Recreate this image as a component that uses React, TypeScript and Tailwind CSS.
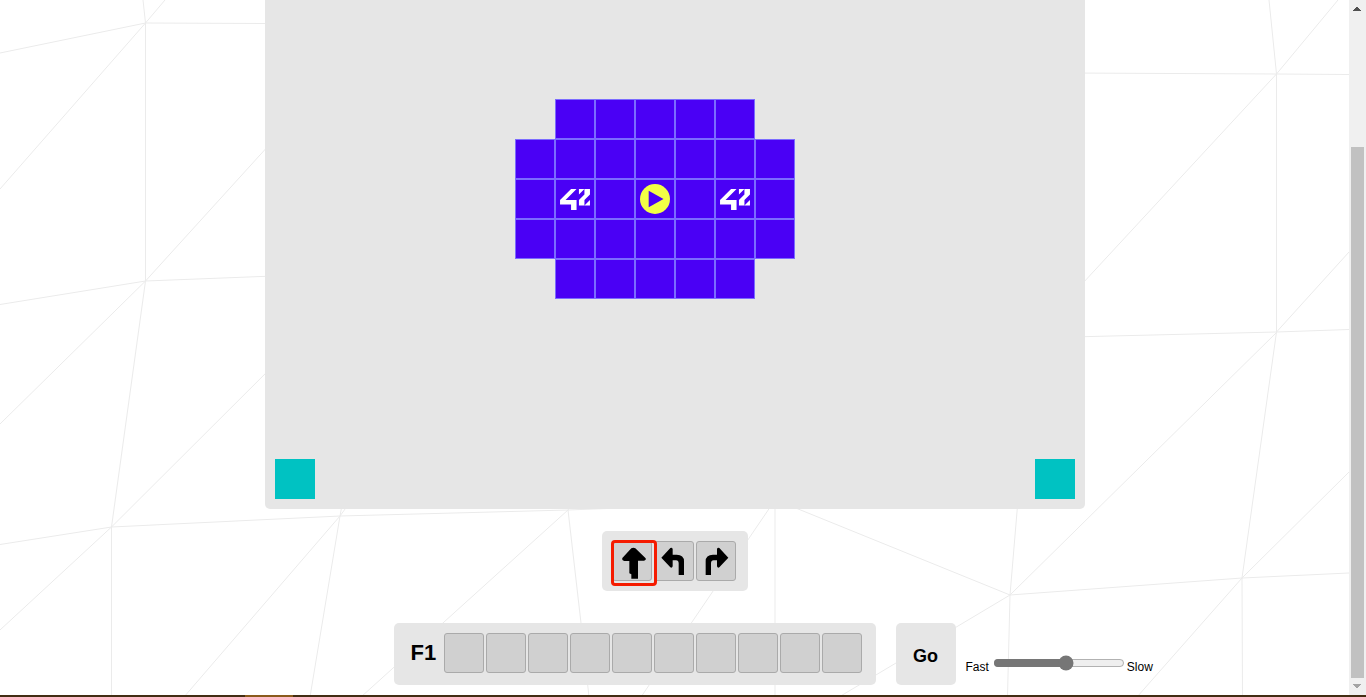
import { useState } from 'react';

const COLUMNS = 20;
const MAP = [
  '.......#####........',
  '......#######.......',
  '......#F#P#F#.......',
  '......#######.......',
  '.......#####........',
  '....................',
  '....................',
  '....................',
  '....................',
  'T..................T',
];

const TILES = MAP.map((row) => row.padEnd(COLUMNS, '.').split(''));

function Mesh() {
  return (
    <svg
      className="absolute inset-0 -z-10 h-full w-full"
      viewBox="0 0 1349 697"
      preserveAspectRatio="xMinYMin slice"
      fill="none"
      stroke="#ebebeb"
      aria-hidden="true"
    >
      <path d="M0 53 145.500 23 265 23.500M143 0 145.500 23V281L111.500 527V697M165 0 145.500 23 0 189M300 111 145.500 281 0 424M0 304.500 145.500 281 300 275M300 339 111.500 527 0 630M0 544.500 111.500 527 340 516 568 510 620 508" />
      <path d="M342 505 340 516 310 697M348 505 340 516 184 697M575 502 568 510 361 697M568 510 581 623 589 697M775 500 641 697M775 500V697M776 500 1010 595 1242 578 1349 573M1018 500 1010 595 1007.500 697M1277 332 1010 595 839 697" />
      <path d="M1269 0 1276.500 74V332L1242 578 1242.500 697M1338 0 1276.500 74 1070 297M1070 73 1276.500 74 1349 74.500M1349 252 1276.500 332M1070 337 1276.500 332 1349 329.500M1349 472 1242 578 1137 697" />
    </svg>
  );
}

function FortyTwo() {
  return (
    <svg className="h-[21px] w-[30px]" viewBox="32 -51 896 629" fill="#fff" aria-hidden="true">
      <path d="M32 412.600H362.100V578H526.800V279.100H197.300L526.800-51.100H362.100L32 279.100ZM597.900 114.200 762.700-51.100H597.900ZM762.700 114.200 597.900 279.100V443.900H762.700V279.100L928 114.200V-51.100H762.700ZM928 279.100 762.700 443.900H928Z" />
    </svg>
  );
}

function Player() {
  return (
    <svg className="size-[30px]" viewBox="0 0 30 30" aria-hidden="true">
      <circle cx="15" cy="15" r="15" fill="#f2ff45" />
      <path d="M8.700 6.700 23.500 15 8.700 23.300Z" fill="#4a00f5" />
    </svg>
  );
}

function Tile({ kind }: { kind: string }) {
  if (kind === '.') return <div />;
  if (kind === 'T') return <div className="bg-[#00c2c2]" />;
  return (
    <div className="flex items-center justify-center border border-[#7b6cff] bg-[#4a00f5]">
      {kind === 'F' && <FortyTwo />}
      {kind === 'P' && <Player />}
    </div>
  );
}

const COMMANDS = [
  {
    label: 'Move forward',
    viewBox: '69 66 114 114',
    path: 'M124 85Q130 81 136 85L167 115Q169 121 162 122H144V176H124V163L118 160V123H103Q95 121 97 114Z',
  },
  {
    label: 'Turn left',
    viewBox: '195 66 114 114',
    path: 'M214 113 241 84Q246 81 248 87V104H260Q282 104 282 124V165H266V130Q266 121 258 121H248V139Q246 145 241 142Z',
  },
  {
    label: 'Turn right',
    viewBox: '321 66 114 114',
    path: 'M415 113 388 84Q383 81 381 87V104H369Q347 104 347 124V165H363V130Q363 121 371 121H381V139Q383 145 388 142Z',
  },
];

function Scrollbar() {
  return (
    <div className="flex w-[17px] shrink-0 flex-col items-center bg-[#f0f0f0]" aria-hidden="true">
      <svg className="h-[17px] w-[17px]" viewBox="0 0 17 17" shapeRendering="crispEdges">
        <path d="M4 11V10H5V9H6V8H7V7H9V8H10V9H11V10H12V11Z" fill="#505050" />
      </svg>
      <div className="flex w-[13px] grow flex-col pt-[130px]">
        <div className="grow bg-[#c1c1c1]" />
      </div>
      <svg className="h-[17px] w-[17px]" viewBox="0 0 17 17" shapeRendering="crispEdges">
        <path d="M4 6V7H5V8H6V9H7V10H9V9H10V8H11V7H12V6Z" fill="#a3a3a3" />
      </svg>
    </div>
  );
}

export default function App() {
  const [selected, setSelected] = useState(0);
  const [speed, setSpeed] = useState(56);

  return (
    <div className="flex min-h-screen flex-col bg-white font-['Liberation_Sans',Arial,sans-serif] text-black">
      <div className="flex grow">
        <main className="relative isolate flex min-w-0 grow flex-col items-center overflow-hidden">
          <Mesh />
          <section
            className="grid auto-rows-[40px] grid-cols-[repeat(20,40px)] rounded-b-[5px] bg-[#e6e6e6] px-2.5 pt-[99px] pb-2.5"
            aria-label="Board"
          >
            {TILES.flatMap((row, y) => row.map((kind, x) => <Tile key={`${x}-${y}`} kind={kind} />))}
          </section>

          <section className="mt-[22px] flex gap-0.5 rounded-[5px] bg-[#e6e6e6] py-2.5 pr-3 pl-2.5" aria-label="Commands">
            {COMMANDS.map((command, i) => (
              <button
                key={command.label}
                type="button"
                aria-label={command.label}
                aria-pressed={selected === i}
                onClick={() => setSelected(i)}
                className="relative size-10 rounded-[3px] border border-[#aaa] bg-[#d0d0d0] aria-pressed:z-10"
              >
                <svg className="h-full w-full" viewBox={command.viewBox} aria-hidden="true">
                  <path d={command.path} />
                </svg>
                {selected === i && (
                  <span className="absolute -top-0.5 -left-0.5 size-[46px] rounded-[4px] border-[3px] border-[#f51b00]" />
                )}
              </button>
            ))}
          </section>

          <div className="mt-8 mb-2.5 grid w-full grid-cols-[1fr_auto_1fr]">
            <div className="col-start-2 flex gap-5">
              <section className="flex items-start rounded-[5px] bg-[#e6e6e6] py-2.5 pr-3.5" aria-label="Program">
                <h2 className="w-[50px] pl-[17px] text-[22px] leading-10 font-bold">F1</h2>
                <div className="flex gap-0.5">
                  {Array.from({ length: 10 }, (_, i) => (
                    <button
                      key={i}
                      type="button"
                      aria-label={`F1 step ${i + 1}`}
                      className="size-10 rounded-[3px] border border-[#aaa] bg-[#d0d0d0]"
                    />
                  ))}
                </div>
              </section>
              <button type="button" className="h-[62px] w-[60px] rounded-[5px] bg-[#e6e6e6] pt-1 text-lg font-bold">
                Go
              </button>
            </div>
            <div className="flex items-end pb-[11px] pl-2.5 text-xs leading-[14px]">
              <label htmlFor="speed">Fast</label>
              <input
                id="speed"
                type="range"
                value={speed}
                onChange={(e) => setSpeed(Number(e.target.value))}
                className="mr-0.5 mb-[3px] ml-1 h-4 w-[132px] accent-[#767676]"
              />
              <span>Slow</span>
            </div>
          </div>
        </main>
        <Scrollbar />
      </div>
      <div className="flex h-0.5 bg-[#432d13]">
        <div className="ml-[245px] w-12 bg-[#8a5a1c]" />
      </div>
    </div>
  );
}
